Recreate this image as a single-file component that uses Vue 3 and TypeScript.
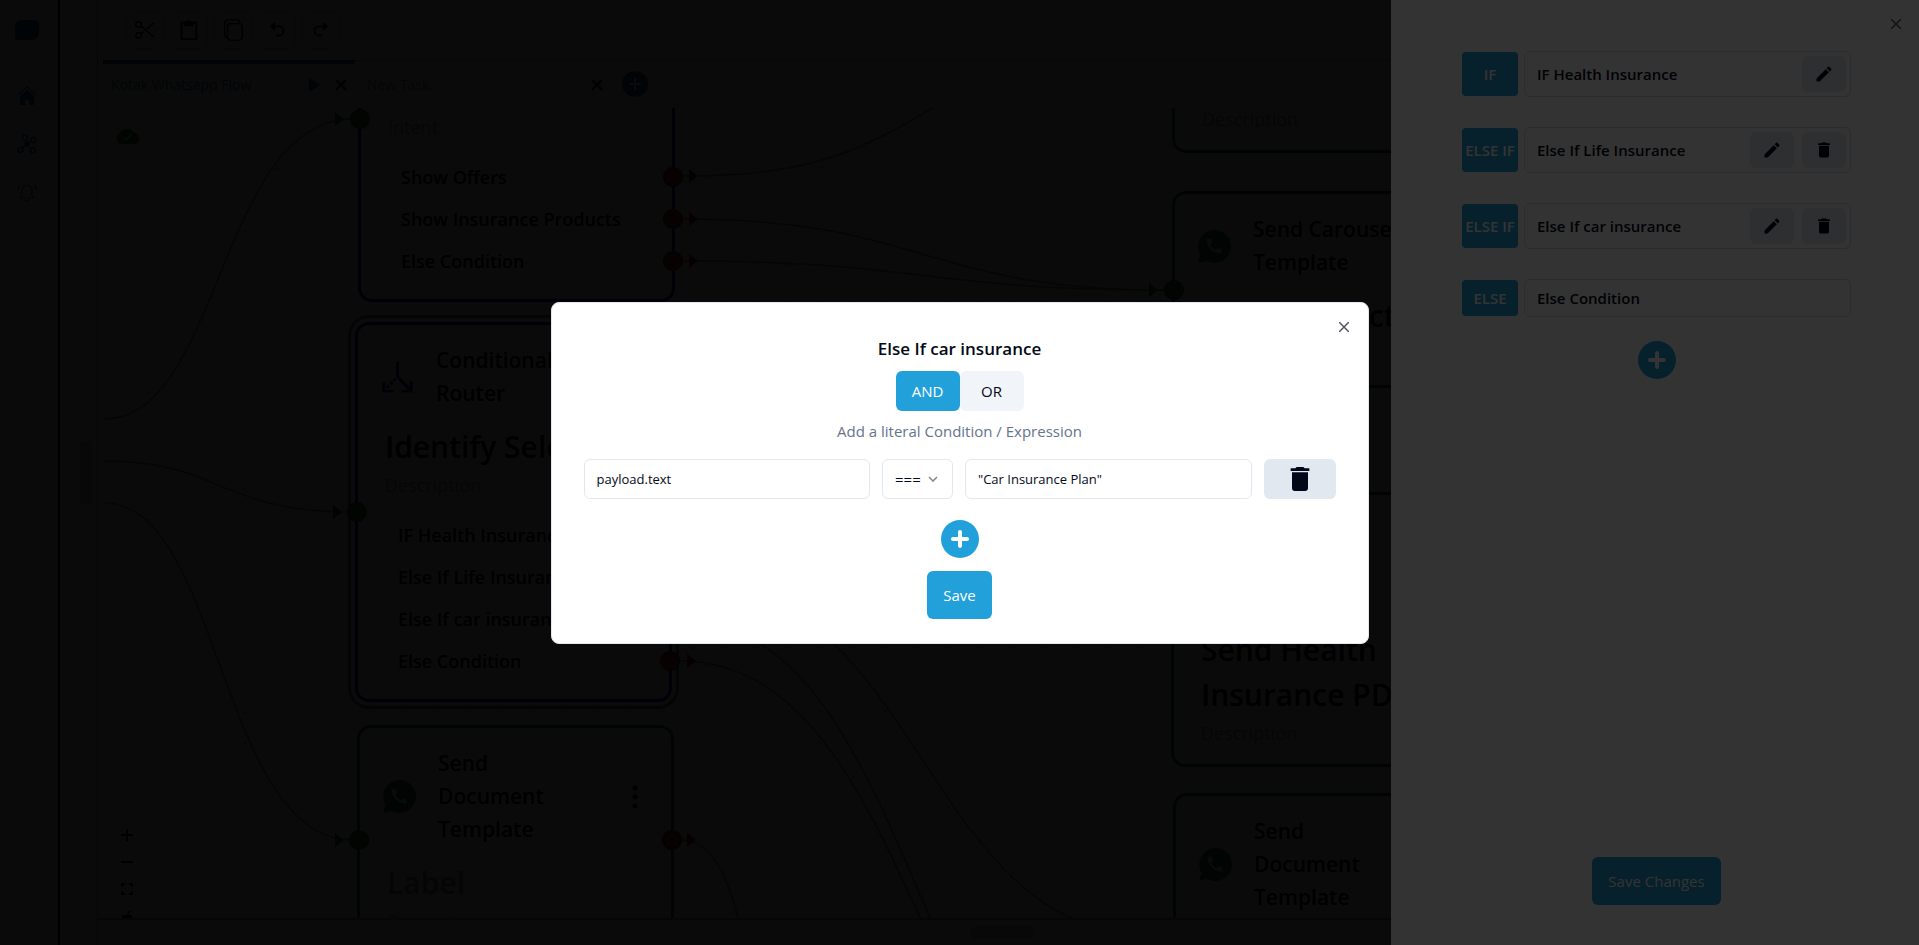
<script setup lang="ts">
import { ref } from 'vue'

interface Port { dy: number }
interface FlowNode {
  id: string
  x: number
  y: number
  width: number
  tone: 'violet' | 'green'
  icon: 'router' | 'whatsapp'
  title: string
  label: string
  muted?: boolean
  description: string
  rows?: string[]
  menu?: boolean
  file?: boolean
  selected?: boolean
  input?: Port
  output?: Port
}
interface Rule { tag: string; name: string; edit: boolean; remove: boolean }

const trashPath = 'M6 19c0 1.1.9 2 2 2h8c1.1 0 2-.9 2-2V7H6v12zM19 4h-3.5l-1-1h-5l-1 1H5v2h14V4z'
const pencilPath = 'M3 17.25V21h3.75L17.81 9.94l-3.75-3.75L3 17.25zM20.71 7.04c.39-.39.39-1.02 0-1.41l-2.34-2.34c-.39-.39-1.02-.39-1.41 0l-1.83 1.83 3.75 3.75 1.83-1.83z'
const phonePath = 'M20.01 15.38c-1.23 0-2.42-.2-3.53-.56-.35-.12-.74-.03-1.01.24l-1.57 1.97c-2.83-1.35-5.48-3.9-6.89-6.83l1.95-1.66c.27-.28.35-.67.24-1.02-.37-1.11-.56-2.3-.56-3.53 0-.54-.45-.99-.99-.99H4.19C3.65 3 3 3.24 3 3.99 3 13.28 10.73 21 20.01 21c.71 0 .99-.63.99-1.18v-3.45c0-.54-.45-.99-.99-.99z'

const pan = { x: -98, y: -108 }

const nodes: FlowNode[] = [
  { id: 'intent', x: 358, y: -64, width: 317, tone: 'violet', icon: 'router', title: '', label: '', description: '\nIntent', rows: ['Show Offers', 'Show Insurance Products', 'Else Condition'], input: { dy: 183 } },
  { id: 'selected', x: 355, y: 322, width: 317, tone: 'violet', icon: 'router', title: 'Conditional\nRouter', label: 'Identify Selected', description: 'Description', rows: ['IF Health Insurance', 'Else If Life Insurance', 'Else If car insurance', 'Else Condition'], selected: true, input: { dy: 190 } },
  { id: 'document', x: 357, y: 725, width: 317, tone: 'green', icon: 'whatsapp', title: 'Send\nDocument\nTemplate', label: 'Label', muted: true, description: 'Description', menu: true, file: true, input: { dy: 115 }, output: { dy: 115 } },
  { id: 'top', x: 1172, y: -44, width: 317, tone: 'green', icon: 'whatsapp', title: '', label: '', description: 'Description' },
  { id: 'carousel', x: 1172, y: 191, width: 317, tone: 'green', icon: 'whatsapp', title: 'Send Carousel\nTemplate', label: 'Send Product', description: '', input: { dy: 99 } },
  { id: 'health', x: 1171, y: 492, width: 317, tone: 'green', icon: 'whatsapp', title: '', label: 'Send Health\nInsurance PDF', description: 'Description' },
  { id: 'document-2', x: 1173, y: 793, width: 317, tone: 'green', icon: 'whatsapp', title: 'Send\nDocument\nTemplate', label: '', muted: true, description: '' },
]

const edges: string[] = [
  'M105 419 C220 419 220 119 352 119',
  'M105 461 C220 461 220 512 350 512',
  'M105 503 C220 503 220 840 352 840',
  'M682 176 C830 176 870 145 980 80',
  'M682 219 C924 219 924 290 1166 290',
  'M682 261 C924 261 924 290 1166 290',
  'M680 661 C922 661 922 1175 1150 1175',
  'M680 620 C922 620 922 1170 1150 1170',
  'M680 578 C922 578 922 935 1150 935',
  'M680 840 C715 840 730 885 740 925',
]
const inArrows = [[335, 119], [333, 512], [335, 840], [1149, 290]]
const outArrows = [[689, 176], [689, 219], [689, 261], [687, 661], [687, 840]]

const rules: Rule[] = [
  { tag: 'IF', name: 'IF Health Insurance', edit: true, remove: false },
  { tag: 'ELSE IF', name: 'Else If Life Insurance', edit: true, remove: true },
  { tag: 'ELSE IF', name: 'Else If car insurance', edit: true, remove: true },
  { tag: 'ELSE', name: 'Else Condition', edit: false, remove: false },
]

const join = ref<'AND' | 'OR'>('AND')
const left = ref('payload.text')
const operator = ref('===')
const right = ref('"Car Insurance Plan"')
</script>

<template>
  <div class="page">
    <nav class="rail" aria-label="Main">
      <svg class="logo" viewBox="0 0 24 20"><path d="M6 0h14a4 4 0 0 1 4 4v9a7 7 0 0 1-7 7H3a3 3 0 0 1-3-3V6a6 6 0 0 1 6-6z" fill="#1478b4" /></svg>
      <a href="#" aria-label="Home">
        <svg viewBox="0 0 20 20"><path d="M1 9 10 1l9 8" fill="none" stroke="#1478b4" stroke-width="1.5" /><path d="M3 10l7-6 7 6v9h-5v-5H8v5H3z" fill="#1478b4" /></svg>
      </a>
      <a href="#" aria-label="Flows">
        <svg viewBox="0 0 20 20" fill="none" stroke="#1478b4" stroke-width="1.5"><circle cx="8" cy="3.500" r="2.500" /><circle cx="16.500" cy="6" r="2.500" /><circle cx="3.500" cy="16" r="2.500" /><circle cx="16" cy="16.500" r="2.500" /><circle cx="10" cy="10" r="2" fill="#1478b4" /><path d="M9 6l1 3M14 7l-3 2M5 14l4-3M14 15l-3-4" /></svg>
      </a>
      <a href="#" aria-label="Notifications">
        <svg viewBox="0 0 20 20" fill="none" stroke="#1478b4" stroke-width="1.200"><path d="M5 14V8a5 5 0 0 1 10 0v6l2 2H3zM8 17a2 2 0 0 0 4 0M2.500 3Q1 5 1 8M17.500 3Q19 5 19 8" /></svg>
      </a>
    </nav>

    <aside class="shelf"><span class="grip tall"></span></aside>

    <main class="main">
      <div class="toolbar">
        <button type="button" aria-label="Cut"><svg viewBox="0 0 24 24" fill="none" stroke="#000" stroke-width="1.500"><circle cx="5" cy="6" r="3" /><circle cx="5" cy="18" r="3" /><path d="M7.500 7.700 22 20M7.500 16.300 11 13.500M14 11l8-7" /></svg></button>
        <button type="button" aria-label="Paste"><svg viewBox="0 0 24 24"><path d="M4 4h16v18H4z" fill="none" stroke="#000" stroke-width="2" /><path d="M7 3h3a2 2 0 0 1 4 0h3v5H7z" /></svg></button>
        <button type="button" aria-label="Copy"><svg viewBox="0 0 24 24" fill="none" stroke="#000" stroke-width="1.500"><rect x="6" y="5" width="16" height="18" rx="3" /><path d="M6 20a3 3 0 0 1-3-3V4a3 3 0 0 1 3-3h10a3 3 0 0 1 3 3" /></svg></button>
        <button type="button" aria-label="Undo"><svg viewBox="0 0 24 24"><path d="M10 3v10L4 8z" /><path d="M9 8h5a5 5 0 0 1 0 10h-3" fill="none" stroke="#000" stroke-width="2" /></svg></button>
        <button type="button" aria-label="Redo"><svg viewBox="0 0 24 24"><path d="M14 3v10l6-5z" /><path d="M15 8h-5a5 5 0 0 0 0 10h3" fill="none" stroke="#000" stroke-width="2" /></svg></button>
      </div>

      <div class="tabs">
        <div class="tab current">
          <a href="#">Kotak Whatsapp Flow</a>
          <button type="button" aria-label="Run"><svg viewBox="0 0 14 14"><path d="M1 0l12 7-12 7z" fill="#1478b4" /></svg></button>
          <button type="button" aria-label="Close Kotak Whatsapp Flow"><svg viewBox="0 0 14 14"><path d="M2 2l10 10M12 2 2 12" stroke="#000" stroke-width="2" /></svg></button>
        </div>
        <div class="tab">
          <a href="#">New Task</a>
          <button type="button" aria-label="Close New Task"><svg viewBox="0 0 14 14"><path d="M2 2l10 10M12 2 2 12" stroke="#000" stroke-width="2" /></svg></button>
        </div>
        <button class="tab-add" type="button" aria-label="Add tab"><svg viewBox="0 0 26 26"><circle cx="13" cy="13" r="13" fill="#1478b4" /><path d="M13 7v12M7 13h12" stroke="#fff" stroke-width="2" /></svg></button>
      </div>

      <section class="canvas">
        <svg class="edges" aria-hidden="true">
          <g :transform="`translate(${pan.x} ${pan.y})`">
            <path v-for="d in edges" :key="d" :d="d" fill="none" stroke="#888" stroke-width="1.500" />
            <path v-for="a in inArrows" :key="a.join()" :d="`M${a[0]} ${a[1] - 7}l9 7-9 7z`" fill="#007a36" />
            <path v-for="a in outArrows" :key="a.join()" :d="`M${a[0]} ${a[1] - 7}l9 7-9 7z`" fill="#b00000" />
          </g>
        </svg>

        <article
          v-for="n in nodes" :key="n.id" class="node" :class="[n.tone, { selected: n.selected }]"
          :style="{ left: n.x + pan.x + 'px', top: n.y + pan.y + 'px', width: n.width + 'px' }"
        >
          <header :class="{ tall: n.id === 'health' }">
            <svg v-if="n.icon === 'router'" class="badge" viewBox="0 0 34 34" fill="none" stroke="#2a10b0" stroke-width="3"><path d="M17 1v15l13 14M31 21v10H21M3 21v10h10" /><path d="M15 18 5 29" stroke-dasharray="3 2" /></svg>
            <svg v-else class="badge" viewBox="0 0 34 34"><path d="M17 0a17 17 0 1 1-8 32L0 34l2.500-8.500A17 17 0 0 1 17 0z" fill="#007a5c" /><path :d="phonePath" fill="#fff" transform="translate(6.500 6.500) scale(.85)" /></svg>
            <h2 v-if="n.title">{{ n.title }}</h2>
            <svg v-if="n.menu" class="dots" viewBox="0 0 6 24"><circle cx="3" cy="3" r="2.500" /><circle cx="3" cy="12" r="2.500" /><circle cx="3" cy="21" r="2.500" /></svg>
          </header>
          <h3 :class="{ muted: n.muted }">{{ n.label }}</h3>
          <p>{{ n.description }}</p>
          <ul v-if="n.rows">
            <li v-for="(r, i) in n.rows" :key="r">{{ r }}<i v-if="!n.selected || i > 2" class="port out"></i></li>
          </ul>
          <svg v-if="n.file" class="file" viewBox="0 0 24 32"><path d="M0 0h14v10h10v22H0z" fill="#8e24aa" /><path d="M16 0l8 8h-8z" fill="#8e24aa" /></svg>
          <i v-if="n.input" class="port in" :style="{ top: n.input.dy + 'px' }"></i>
          <i v-if="n.output" class="port out" :style="{ top: n.output.dy + 'px' }"></i>
        </article>

        <svg class="cloud" viewBox="0 0 24 16"><path d="M6 16a6 6 0 0 1-1-11 8 8 0 0 1 14 0 5.500 5.500 0 0 1 0 11z" fill="#008020" /><path d="M8 9l3 3 6-6" fill="none" stroke="#fff" stroke-width="1.500" /></svg>
        <div class="controls">
          <button type="button" aria-label="Zoom in"><svg viewBox="0 0 12 12"><path d="M6 0v12M0 6h12" stroke="#000" stroke-width="2" /></svg></button>
          <button type="button" aria-label="Zoom out"><svg viewBox="0 0 12 12"><path d="M0 6h12" stroke="#000" stroke-width="2" /></svg></button>
          <button type="button" aria-label="Fit view"><svg viewBox="0 0 12 12" fill="none" stroke="#000" stroke-width="2"><path d="M1 4V1h3M8 1h3v3M11 8v3H8M4 11H1V8" /></svg></button>
          <button type="button" aria-label="Lock"><svg viewBox="0 0 12 12"><path d="M1 5h10v7H1z" /><path d="M7 5V3a2 2 0 0 1 3-1" fill="none" stroke="#000" stroke-width="1.500" /></svg></button>
        </div>
      </section>

      <footer class="dock"><span class="grip"></span></footer>
    </main>

    <div class="shade"></div>

    <aside class="drawer" aria-label="Conditions">
      <button class="close" type="button" aria-label="Close panel"><svg viewBox="0 0 10 10"><path d="M0 0l10 10M10 0 0 10" stroke="#5b6070" stroke-width="1.500" /></svg></button>
      <ul class="rules">
        <li v-for="r in rules" :key="r.name">
          <span class="tag">{{ r.tag }}</span>
          <div class="rule">
            <span>{{ r.name }}</span>
            <button v-if="r.edit" type="button" :aria-label="'Edit ' + r.name"><svg viewBox="0 0 24 24"><path :d="pencilPath" fill="#020817" /></svg></button>
            <button v-if="r.remove" type="button" :aria-label="'Delete ' + r.name"><svg viewBox="0 0 24 24"><path :d="trashPath" fill="#020817" /></svg></button>
          </div>
        </li>
      </ul>
      <button class="plus" type="button" aria-label="Add rule"><svg viewBox="0 0 38 38"><circle cx="19" cy="19" r="19" fill="#22a0da" /><path d="M19 12v14M12 19h14" stroke="#fff" stroke-width="4" stroke-linecap="round" /></svg></button>
      <button class="primary end" type="button">Save Changes</button>
    </aside>

    <div class="shade modal">
      <form class="dialog" role="dialog" aria-modal="true" aria-labelledby="dialog-title" @submit.prevent>
        <button class="close" type="button" aria-label="Close dialog"><svg viewBox="0 0 10 10"><path d="M0 0l10 10M10 0 0 10" stroke="#4f5463" stroke-width="1.500" /></svg></button>
        <h1 id="dialog-title">Else If car insurance</h1>
        <div class="join" role="group" aria-label="Join conditions">
          <button type="button" :class="{ on: join === 'AND' }" :aria-pressed="join === 'AND'" @click="join = 'AND'">AND</button>
          <button type="button" :class="{ on: join === 'OR' }" :aria-pressed="join === 'OR'" @click="join = 'OR'">OR</button>
        </div>
        <p class="hint">Add a literal Condition / Expression</p>
        <div class="clause">
          <input v-model="left" type="text" aria-label="Left value" />
          <div class="pick">
            <select v-model="operator" aria-label="Operator">
              <option>===</option>
              <option>!==</option>
              <option>&gt;</option>
              <option>&lt;</option>
            </select>
            <svg viewBox="0 0 10 6"><path d="M1 1l4 4 4-4" fill="none" stroke="#80848e" stroke-width="1.500" /></svg>
          </div>
          <input v-model="right" type="text" aria-label="Right value" />
          <button class="bin" type="button" aria-label="Delete condition"><svg viewBox="0 0 24 24"><path :d="trashPath" fill="#020817" /></svg></button>
        </div>
        <button class="plus" type="button" aria-label="Add condition"><svg viewBox="0 0 38 38"><circle cx="19" cy="19" r="19" fill="#22a0da" /><path d="M19 12v14M12 19h14" stroke="#fff" stroke-width="4" stroke-linecap="round" /></svg></button>
        <button class="primary" type="submit">Save</button>
      </form>
    </div>
  </div>
</template>

<style>
body { margin: 0; overflow: hidden; }
</style>

<style scoped>
.page, .page * { box-sizing: border-box; }
.page { position: relative; display: flex; height: 100vh; overflow: hidden; background: #fff; color: #020817; font: 15px/24px "Open Sans", "Noto Sans", sans-serif; }
button { padding: 0; border: 0; background: none; font: inherit; color: inherit; cursor: pointer; }
svg { display: block; }
h1, h2, h3, p, ul { margin: 0; padding: 0; list-style: none; }

.rail { flex: none; width: 60px; display: flex; flex-direction: column; align-items: center; padding: 20px 4px 0 0; border-right: 2px solid #000; }
.rail a { margin-bottom: 28px; }
.rail a svg { width: 20px; height: 20px; }
.logo { flex: none; width: 24px; height: 20px; margin-bottom: 46px; }
.shelf { flex: none; width: 38px; display: flex; align-items: center; justify-content: flex-end; padding-right: 5px; border-right: 1px solid #999; }
.grip { width: 63px; height: 12px; border-radius: 4px; background: #ccc; }
.grip.tall { width: 12px; height: 63px; }

.main { flex: 1; min-width: 0; display: flex; flex-direction: column; }
.toolbar { flex: none; height: 60px; display: flex; gap: 6px; padding: 11px 0 11px 28px; }
.toolbar button { width: 38px; height: 38px; display: grid; place-items: center; border: 1px solid #ddd; border-radius: 6px; }
.toolbar svg { width: 22px; height: 22px; }
.tabs { flex: none; height: 48px; display: flex; align-items: flex-start; padding-left: 5px; color: #888; font-size: 14px; }
.tab { width: 256px; height: 48px; display: flex; align-items: center; gap: 12px; padding: 0 7px 0 8px; border-top: 1px solid #bbb; }
.tab.current { width: 252px; border-top: 4px solid #1478b4; padding-bottom: 3px; }
.tab a { flex: 1; color: inherit; text-decoration: none; }
.tab:not(.current) a { padding-left: 4px; }
.tab.current a { color: #1478b4; }
.tab svg { width: 14px; height: 14px; }
.tab-add { flex: 1; height: 46px; padding: 0 11px; border-top: 1px solid #bbb; }
.tab-add svg { width: 26px; height: 26px; }
.canvas { position: relative; flex: 1; min-height: 0; overflow: hidden; background-image: radial-gradient(circle, #888 1px, transparent 1px); background-size: 32px 32px; background-position: 3px 12px; }
.dock { flex: none; height: 27px; display: flex; align-items: center; justify-content: center; padding-right: 12px; border-top: 2px solid #aaa; }

.edges { position: absolute; inset: 0; width: 100%; height: 100%; }
.node { position: absolute; padding: 19px 12px 17px 23px; border: 3px solid; border-radius: 14px; background: #fff; color: #000; }
.node.violet { border-color: #3204be; }
.node.green { border-color: #007a5c; }
.node.selected { box-shadow: 0 0 0 4px #fff, 0 0 0 7px #777; }
.node header { min-height: 66px; display: flex; align-items: center; margin-bottom: 14px; }
.node header.tall { min-height: 99px; }
.node h2 { flex: 1; font-size: 21px; font-weight: 600; line-height: 33px; white-space: pre-line; }
.badge { flex: none; width: 33px; height: 33px; margin-right: 22px; }
.dots { width: 6px; height: 28px; margin-right: 21px; }
.node h3 { min-height: 45px; padding-left: 4px; font-size: 30px; font-weight: 600; line-height: 45px; white-space: pre-line; }
.node h3.muted { color: #888; }
.node p { min-height: 28px; margin-top: 2px; padding-left: 4px; font-size: 18px; line-height: 28px; white-space: pre-wrap; color: #999; }
.node ul { margin: 15px -12px 0 0; }
.node li { position: relative; padding-left: 17px; font-size: 18px; font-weight: 600; line-height: 42px; }
.port { position: absolute; width: 20px; height: 20px; margin-top: -13px; border: 1px solid #222; border-radius: 50%; }
.port.in { left: -11px; background: #0c9040; }
.port.out { right: -11px; background: #c02020; }
.node li .port { top: 50%; margin-top: -10px; }
.file { position: absolute; right: 30px; bottom: 0; width: 24px; height: 32px; }
.cloud { position: absolute; left: 17px; top: 20px; width: 24px; height: 16px; }
.controls { position: absolute; left: 17px; bottom: -10px; display: flex; flex-direction: column; gap: 3px; }
.controls button { width: 24px; height: 24px; display: grid; place-items: center; }
.controls svg { width: 12px; height: 12px; }

.shade { position: absolute; inset: 0; background: rgba(0, 0, 0, .8); }
.shade.modal { display: grid; place-items: center; }
.close { position: absolute; top: 16px; right: 15px; width: 16px; height: 16px; display: grid; place-items: center; }
.close svg { width: 10px; height: 10px; }
.primary { height: 48px; padding: 0 16px; border-radius: 6px; background: #22a0da; color: #fff; }
.plus svg { width: 38px; height: 38px; }

.drawer { position: absolute; top: 0; right: 0; bottom: 0; width: 528px; display: flex; flex-direction: column; align-items: center; padding: 40px 47px 40px 50px; background: #fff; }
.rules { width: 100%; display: flex; flex-direction: column; gap: 8px; }
.rules li { display: flex; align-items: stretch; gap: 6px; padding: 11px 21px; border-radius: 8px; background: #fcfcfc; }
.tag { flex: none; width: 56px; display: grid; place-items: center; margin: 1px 0; border-radius: 4px; background: #22a0da; color: #fff; font-weight: 600; white-space: nowrap; }
.rule { flex: 1; min-height: 38px; display: flex; align-items: center; gap: 8px; padding: 4px 4px 4px 12px; border: 1px solid #d5dade; border-radius: 6px; background: #fff; font-weight: 600; }
.rule span { flex: 1; }
.rule button { width: 44px; height: 36px; display: grid; place-items: center; border-radius: 6px; background: #e2e8f0; }
.rule svg { width: 20px; height: 20px; }
.drawer .plus { margin-top: 13px; }
.end { margin-top: auto; }

.dialog { position: relative; width: 818px; max-width: 100%; display: flex; flex-direction: column; align-items: center; padding: 32px 32px 24px; border: 1px solid #e2e8f0; border-radius: 8px; background: #fff; }
.dialog .close { right: 16px; }
.dialog h1 { margin-bottom: 8px; font-size: 17px; font-weight: 600; line-height: 28px; }
.join { display: flex; border-radius: 6px; }
.join button { width: 64px; height: 40px; border-radius: 6px; background: #f1f5f9; color: #020817; }
.join .on { background: #22a0da; color: #fff; font-weight: 500; }
.hint { margin: 8px 0 16px; color: #64748b; }
.clause { width: 100%; display: grid; grid-template-columns: 1fr 71px 1fr 72px; gap: 12px; }
.clause input, .clause select { width: 100%; height: 40px; padding: 0 12px; border: 1px solid #e2e8f0; border-radius: 6px; background: #fff; color: #020817; font: inherit; font-size: 13px; }
.pick { display: grid; align-items: center; }
.pick select, .pick svg { grid-area: 1 / 1; }
.clause .pick select { appearance: none; font-size: 15px; }
.pick svg { justify-self: end; width: 10px; height: 6px; margin-right: 15px; pointer-events: none; }
.bin { display: grid; place-items: center; border-radius: 6px; background: #e2e8f0; }
.bin svg { width: 32px; height: 32px; }
.dialog .plus { margin: 21px 0 13px; }
</style>
